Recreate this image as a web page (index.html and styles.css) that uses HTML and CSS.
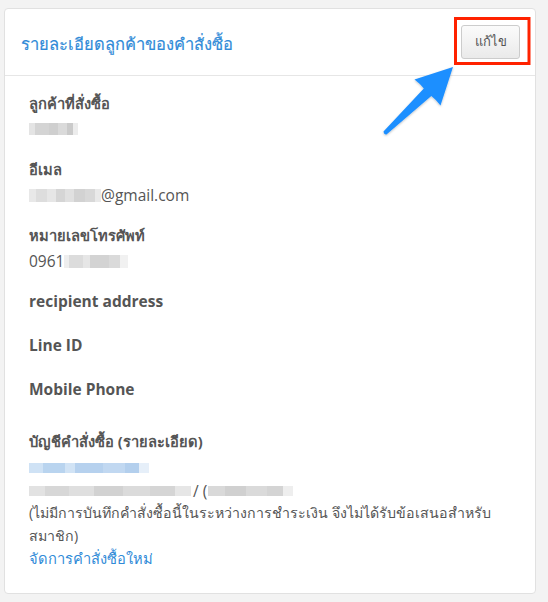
FILE: index.html
```html
<!DOCTYPE html>
<html lang="th">
<head>
<meta charset="utf-8">
<title>รายละเอียดลูกค้าของคำสั่งซื้อ</title>
<link rel="stylesheet" href="styles.css">
</head>
<body>
<div class="card">
  <div class="card-header">
    <h2 class="card-title">รายละเอียดลูกค้าของคำสั่งซื้อ</h2>
    <button class="btn">แก้ไข</button>
  </div>
  <div class="card-body">
    <div class="field">
      <div class="label">ลูกค้าที่สั่งซื้อ</div>
      <div class="value"><span class="blur blur-name"></span></div>
    </div>
    <div class="field">
      <div class="label">อีเมล</div>
      <div class="value"><span class="blur blur-email"></span><span class="latin">@gmail.com</span></div>
    </div>
    <div class="field">
      <div class="label">หมายเลขโทรศัพท์</div>
      <div class="value"><span class="latin">0961</span><span class="blur blur-phone"></span></div>
    </div>
    <div class="field field-empty">
      <div class="label latin">recipient address</div>
    </div>
    <div class="field field-empty">
      <div class="label latin">Line ID</div>
    </div>
    <div class="field field-empty">
      <div class="label latin">Mobile Phone</div>
    </div>
    <div class="field field-last">
      <div class="label">บัญชีคำสั่งซื้อ (รายละเอียด)</div>
      <div class="lines">
        <div class="line-row"><span class="blur blur-link"></span></div>
        <div class="line-row"><span class="blur blur-line1"></span><span class="latin sep">/ (</span><span class="blur blur-line2"></span></div>
        <p class="note">(ไม่มีการบันทึกคำสั่งซื้อนี้ในระหว่างการชำระเงิน จึงไม่ได้รับข้อเสนอสำหรับ<br>สมาชิก)</p>
        <div><a class="link" href="#">จัดการคำสั่งซื้อใหม่</a></div>
      </div>
    </div>
  </div>
</div>
<svg class="annot" viewBox="0 0 548 602" width="548" height="602">
  <defs>
    <filter id="sh" x="-20%" y="-20%" width="140%" height="140%">
      <feDropShadow dx="0" dy="1" stdDeviation="1" flood-color="#000" flood-opacity="0.25"/>
    </filter>
  </defs>
  <rect x="455.5" y="18.5" width="73.5" height="45" fill="none" stroke="#ff2200" stroke-width="3"/>
  <path filter="url(#sh)" fill="#1e8fff" d="M383.5 131.5 L423.8 88.6 Q420 83.5 414.5 79.5 L453 67 L440.5 105.5 Q436 99.5 431.3 96 L386.5 134.5 Q384 135 383.5 131.5 Z"/>
</svg>
</body>
</html>
```
FILE: styles.css
```css
html, body {
  margin: 0;
  padding: 0;
}
body {
  position: relative;
  width: 548px;
  height: 602px;
  background: #f3f3f3;
  font-family: "Open Sans", "Noto Sans", "DejaVu Sans", sans-serif;
  font-size: 14px;
  color: #555;
  overflow: hidden;
}
.card {
  position: absolute;
  left: 4px;
  top: 8px;
  width: 530px;
  height: 584px;
  background: #fff;
  border: 1px solid #e1e1e1;
  border-radius: 4px;
}
.card-header {
  height: 66px;
  border-bottom: 1px solid #e6e6e6;
  display: flex;
  align-items: center;
  justify-content: space-between;
  padding: 0 15px 0 16px;
}
.card-title {
  margin: 0;
  font-size: 16.5px;
  font-weight: normal;
  color: #318bd8;
  line-height: 20px;
  padding-top: 3px;
  -webkit-text-stroke: 0.2px #318bd8;
}
.btn {
  width: 59px;
  height: 34px;
  margin-top: -1px;
  border: 1px solid #cccccc;
  border-radius: 3px;
  background: linear-gradient(#fbfbfb, #eaeaea);
  font-family: "Open Sans", "Noto Sans", sans-serif;
  font-size: 13px;
  color: #555;
  padding: 0;
}
.card-body {
  padding: 16px 20px 0 24px;
}
.latin {
  font-size: 15.5px;
}
.field {
  margin-bottom: 18px;
}
.field-empty {
  margin-bottom: 22px;
}
.label {
  font-weight: bold;
  font-size: 14.7px;
  line-height: 22px;
  color: #555;
}
.label.latin {
  font-size: 15.5px;
}
.value {
  margin-top: 4px;
  height: 22px;
  display: flex;
  align-items: center;
}
.field-last {
  margin-top: 30px;
}
.lines {
  margin-top: 5px;
  line-height: 22.5px;
}
.line-row {
  height: 22.5px;
  display: flex;
  align-items: center;
}
.sep {
  margin: 0 1px 0 2px;
}
.note {
  margin: 0;
  font-size: 14.2px;
}
.link {
  color: #318bd8;
  text-decoration: none;
  font-size: 14.7px;
}
.blur {
  display: inline-block;
  height: 12px;
}
.blur-name {
  width: 49px;
  background: linear-gradient(90deg, #e4e4e4 0 12%, #d4d4d4 12% 40%, #cfcfcf 40% 60%, #dadada 60% 78%, #cacaca 78% 90%, #ececec 90% 100%);
}
.blur-email {
  width: 72px;
  height: 13px;
  background: linear-gradient(90deg, #e8e8e8 0 10%, #dddddd 10% 25%, #e6e6e6 25% 38%, #d5d5d5 38% 50%, #e0e0e0 50% 62%, #d2d2d2 62% 78%, #d8d8d8 78% 92%, #e9e9e9 92% 100%);
}
.blur-phone {
  width: 64px;
  height: 13px;
  background: linear-gradient(90deg, #eeeeee 0 8%, #dcdcdc 8% 30%, #e6e6e6 30% 40%, #d3d3d3 40% 70%, #dadada 70% 88%, #f1f1f1 88% 100%);
}
.blur-link {
  width: 120px;
  height: 10px;
  background: linear-gradient(90deg, #cfe2f5 0 12%, #b9d4ef 12% 30%, #d1e3f5 30% 38%, #b6d1ee 38% 62%, #c1d8f1 62% 80%, #b3cfed 80% 92%, #e6eff9 92% 100%);
}
.blur-line1 {
  width: 162px;
  height: 10px;
  background: linear-gradient(90deg, #e2e2e2 0 10%, #d7d7d7 10% 25%, #dfdfdf 25% 40%, #d2d2d2 40% 58%, #dbdbdb 58% 75%, #d5d5d5 75% 90%, #e6e6e6 90% 100%);
}
.blur-line2 {
  width: 85px;
  height: 10px;
  background: linear-gradient(90deg, #d9d9d9 0 20%, #d0d0d0 20% 45%, #dadada 45% 70%, #d4d4d4 70% 88%, #eeeeee 88% 100%);
}
.annot {
  position: absolute;
  left: 0;
  top: 0;
  pointer-events: none;
}
```
